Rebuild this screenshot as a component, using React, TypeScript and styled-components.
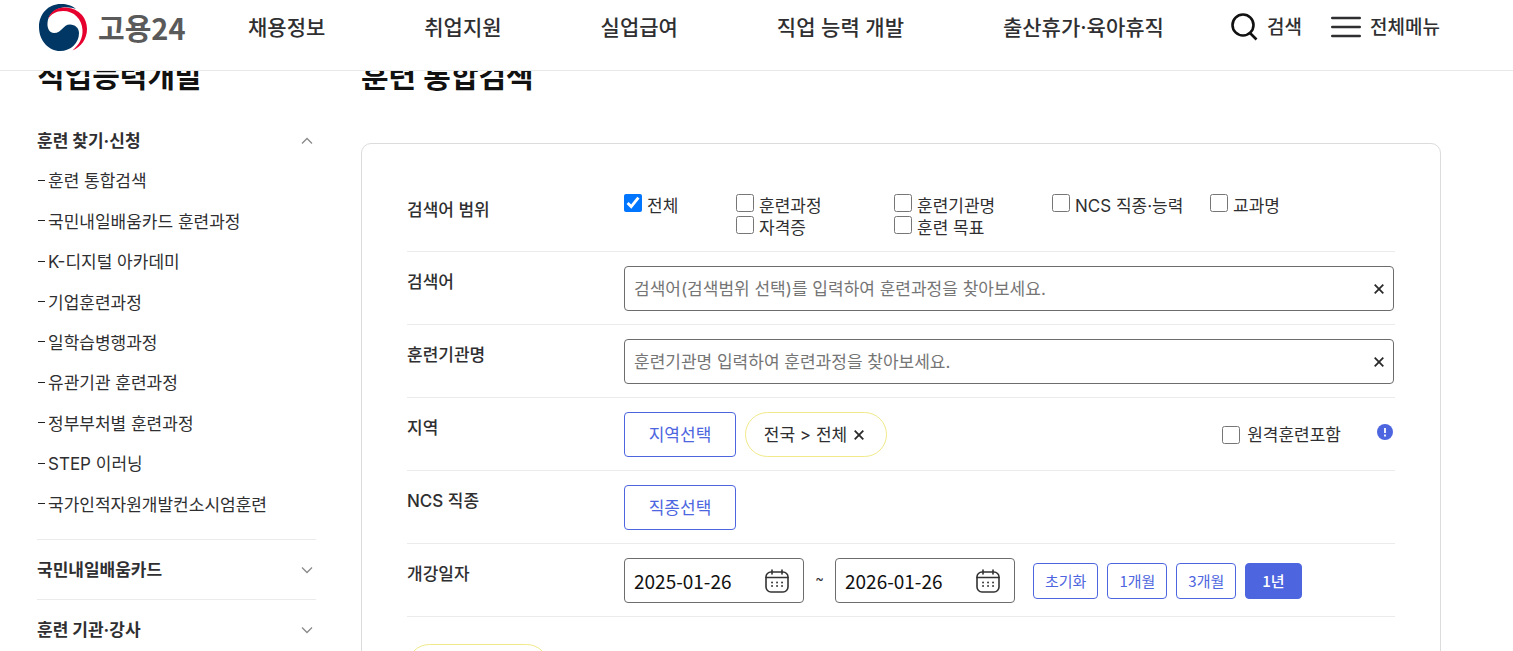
import React, { useState } from "react";
import styled, { createGlobalStyle, css } from "styled-components";

const GlobalStyle = createGlobalStyle`
  *, *::before, *::after { box-sizing: border-box; }
  html { height: 100%; overflow: hidden; }
  body {
    margin: 0;
    height: 100%;
    overflow: hidden;
    background: #fff;
    color: #2f2f31;
    font-family: Inter, "Noto Sans CJK KR", sans-serif;
    font-size: 17px;
    line-height: 24px;
  }
  h1, h2, ul, p, fieldset { margin: 0; padding: 0; border: 0; }
  ul { list-style: none; }
  a { color: inherit; text-decoration: none; }
  button, input { font: inherit; color: inherit; }
  button { padding: 0; border: 0; background: none; cursor: pointer; }
`;

const Header = styled.header`
  position: sticky;
  top: 0;
  z-index: 2;
  display: flex;
  align-items: flex-start;
  height: 71px;
  padding: 3px 73px 0 37px;
  background: #fff;
  border-bottom: 1px solid #e8e8e8;
`;

const Logo = styled.a`
  display: flex;
  align-items: center;
  gap: 10px;
  width: 211px;
  height: 48px;
  color: #5a5a5a;
  font: 700 29px/48px "Noto Sans CJK KR", sans-serif;
  white-space: nowrap;
`;

const Nav = styled.nav`
  display: flex;
  gap: 99px;
  font-size: 21px;
  font-weight: 500;
  line-height: 50px;
  white-space: nowrap;
`;

const Tools = styled.div`
  display: flex;
  gap: 29px;
  margin-left: auto;
`;

const Tool = styled.button`
  display: flex;
  align-items: center;
  gap: 9px;
  height: 48px;
  font-size: 19px;
  font-weight: 500;
  line-height: 28px;
  white-space: nowrap;
  span { padding-top: 2px; }
`;

const Page = styled.div`
  display: grid;
  grid-template-columns: 279px minmax(0, 1fr);
  column-gap: 45px;
  margin-top: -17px;
  padding: 0 72px 0 37px;
`;

const Title = styled.h1`
  color: #111;
  font-size: 30px;
  font-weight: 700;
  line-height: 44px;
  white-space: nowrap;
`;

const Group = styled.section`
  border-top: 1px solid #ebebeb;
  &:first-of-type { margin-top: 13px; border-top: 0; }
`;

const GroupHead = styled.button`
  display: flex;
  align-items: center;
  justify-content: space-between;
  width: 100%;
  height: 59px;
  padding-right: 3px;
  font-weight: 700;
`;

const Links = styled.ul`
  display: grid;
  grid-auto-rows: 1fr;
  height: 378px;
  padding-bottom: 14px;
  margin-top: -9px;
  li { display: flex; align-items: center; gap: 3px; white-space: nowrap; }
  li::before { content: ""; width: 7px; height: 1px; margin: 0 0 2px 1px; background: #222; }
`;

const Panel = styled.form`
  margin-top: 45px;
  padding: 32px 45px 48px;
  border: 1px solid #dcdcdc;
  border-radius: 10px;
`;

const Row = styled.div<{ $tall?: boolean }>`
  display: grid;
  grid-template-columns: 217px minmax(0, 1fr);
  padding: ${(p) => (p.$tall ? "18px 0 11px" : "14px 0 13px")};
  border-bottom: 1px solid #ebebeb;
`;

const RowLabel = styled.span`
  padding-top: 4px;
  font-weight: 500;
`;

const Checks = styled.div`
  display: grid;
  grid-template-columns: 112px repeat(3, 158px) auto;
  grid-auto-rows: 22px;
  padding-bottom: 2px;
`;

const Check = styled.label<{ $second?: boolean; $center?: boolean }>`
  display: flex;
  align-items: ${(p) => (p.$center ? "center" : "flex-start")};
  gap: ${(p) => (p.$center ? 7 : 5)}px;
  white-space: nowrap;
  ${(p) => p.$second && css`grid-column: 2;`}
  input { width: 18px; height: 18px; margin: 0; flex: none; accent-color: #0075ff; }
`;

const Field = styled.div`
  display: flex;
  align-items: center;
  height: 45px;
  margin-right: 1px;
  padding: 0 9px;
  border: 1px solid #6d6d6d;
  border-radius: 4px;
`;

const TextInput = styled.input`
  flex: 1;
  min-width: 0;
  padding: 0;
  border: 0;
  outline: 0;
  background: none;
  &::placeholder { color: #757575; opacity: 1; }
`;

const IconButton = styled.button`
  display: flex;
`;

const Line = styled.div`
  display: flex;
  align-items: center;
  height: 45px;
`;

const Picker = styled.button`
  width: 112px;
  height: 45px;
  border: 1px solid #4d66e0;
  border-radius: 4px;
  color: #4d66e0;
`;

const Tag = styled.button`
  display: flex;
  align-items: center;
  justify-content: center;
  gap: 7px;
  width: 142px;
  height: 45px;
  padding-right: 4px;
  border: 1px solid #f1ea8a;
  border-radius: 23px;
`;

const RegionTag = styled(Tag)`
  margin-left: 9px;
`;

const Remote = styled.div`
  display: flex;
  align-items: center;
  gap: 36px;
  margin-left: auto;
  padding-right: 2px;
`;

const Info = styled(IconButton)`
  height: 22px;
`;

const DateField = styled(Field)`
  width: 180px;
  margin: 0;
  padding-right: 14px;
  color: #111;
  font: 400 19px/24px "Noto Sans CJK KR", sans-serif;
`;

const Tilde = styled.span`
  width: 31px;
  padding-bottom: 6px;
  font-size: 13px;
  text-align: center;
`;

const Periods = styled.div`
  display: flex;
  gap: 9px;
  margin-left: 18px;
`;

const Period = styled.button<{ $active?: boolean }>`
  height: 36px;
  padding: 0 ${(p) => (p.$active ? 16 : 11)}px;
  border: 1px solid #4d66e0;
  border-radius: 4px;
  background: ${(p) => (p.$active ? "#4d66e0" : "#fff")};
  color: ${(p) => (p.$active ? "#fff" : "#4d66e0")};
  font: ${(p) => (p.$active ? 500 : 400)} 15px/22px "Noto Sans CJK KR", sans-serif;
  white-space: nowrap;
`;

const Selected = styled.div`
  padding-top: 27px;
`;

const Emblem = () => (
  <svg width="51" height="49" viewBox="0 0 51 49" aria-hidden="true">
    <path d="M39 6C33 1 27 1 24 1 11 1 2 11 2 24c0 14 10 24 21 24 11 0 19-8 19-18 0-5-4-8.500-9-8.500C26 21.500 25 30 17 30c-4 0-7-4-6.500-10C11 12 17 5.500 26 4.500c5-.500 10 .500 13 1.500Z" fill="#003764" />
    <path d="M11 16C14 8 20 4.500 27 4.500c13 0 23 8.500 23 21.500 0 10-6 18-14.500 21.500C42 42 46 35 45.500 27 45 16 37 8 26 8c-7 0-12 3-15 8Z" fill="#e6002d" />
  </svg>
);

const SearchIcon = () => (
  <svg width="28" height="30" viewBox="0 0 28 30" fill="none" stroke="#111" strokeWidth="2.600" aria-hidden="true">
    <circle cx="13" cy="13" r="10.500" />
    <path d="m19.500 20.500 7 7" />
  </svg>
);

const MenuIcon = () => (
  <svg width="30" height="24" viewBox="0 0 30 24" stroke="#2f2f31" strokeWidth="2.400" strokeLinecap="round" aria-hidden="true">
    <path d="M1.200 3h27.600M1.200 12h27.600M1.200 21h27.600" />
  </svg>
);

const Chevron = ({ up }: { up?: boolean }) => (
  <svg width="12" height="8" viewBox="0 0 12 8" fill="none" stroke="#8a8a8a" strokeWidth="1.300" aria-hidden="true">
    <path d={up ? "M1 6.500 6 1.500l5 5" : "M1 1.500l5 5 5-5"} />
  </svg>
);

const Cross = () => (
  <svg width="10" height="10" viewBox="0 0 10 10" stroke="#2b2b2b" strokeWidth="1.800" aria-hidden="true">
    <path d="M.7.700l8.600 8.600M9.300.700.700 9.300" />
  </svg>
);

const CalendarIcon = () => (
  <svg width="24" height="24" viewBox="0 0 24 24" fill="none" stroke="#333" strokeWidth="1.600" strokeLinecap="round" aria-hidden="true">
    <rect x="1" y="3" width="22" height="20" rx="5" />
    <path d="M1 8.500h22M7 1v4M17 1v4" />
    <path d="M7 13.500h.1M12 13.500h.1M17 13.500h.1M7 17h.1M12 17h.1M17 17h.1" strokeWidth="1.800" />
  </svg>
);

const navItems = ["채용정보", "취업지원", "실업급여", "직업 능력 개발", "출산휴가·육아휴직"];
const courses = [
  "훈련 통합검색",
  "국민내일배움카드 훈련과정",
  "K-디지털 아카데미",
  "기업훈련과정",
  "일학습병행과정",
  "유관기관 훈련과정",
  "정부부처별 훈련과정",
  "STEP 이러닝",
  "국가인적자원개발컨소시엄훈련",
];
const scopes = ["전체", "훈련과정", "훈련기관명", "NCS 직종·능력", "교과명", "자격증", "훈련 목표"];
const periods = ["초기화", "1개월", "3개월", "1년"];

const SearchField = ({ id, label, placeholder }: { id: string; label: string; placeholder: string }) => {
  const [value, setValue] = useState("");
  return (
    <Row>
      <RowLabel as="label" htmlFor={id}>{label}</RowLabel>
      <Field>
        <TextInput id={id} placeholder={placeholder} value={value} onChange={(e) => setValue(e.target.value)} />
        <IconButton type="button" aria-label="지우기" onClick={() => setValue("")}><Cross /></IconButton>
      </Field>
    </Row>
  );
};

const DateBox = ({ label, initial }: { label: string; initial: string }) => (
  <DateField>
    <TextInput aria-label={label} defaultValue={initial} />
    <IconButton type="button" aria-label="달력"><CalendarIcon /></IconButton>
  </DateField>
);

export default function App() {
  const [period, setPeriod] = useState("1년");
  return (
    <>
      <GlobalStyle />
      <Header>
        <Logo href="#"><Emblem />고용24</Logo>
        <Nav>{navItems.map((n) => <a href="#" key={n}>{n}</a>)}</Nav>
        <Tools>
          <Tool><SearchIcon /><span>검색</span></Tool>
          <Tool><MenuIcon /><span>전체메뉴</span></Tool>
        </Tools>
      </Header>
      <Page>
        <aside>
          <Title as="h2">직업능력개발</Title>
          <Group>
            <GroupHead>훈련 찾기·신청<Chevron up /></GroupHead>
            <Links>{courses.map((c) => <li key={c}><a href="#">{c}</a></li>)}</Links>
          </Group>
          <Group><GroupHead>국민내일배움카드<Chevron /></GroupHead></Group>
          <Group><GroupHead>훈련 기관·강사<Chevron /></GroupHead></Group>
        </aside>
        <main>
          <Title>훈련 통합검색</Title>
          <Panel onSubmit={(e) => e.preventDefault()}>
            <Row $tall>
              <RowLabel>검색어 범위</RowLabel>
              <Checks>
                {scopes.map((s, i) => (
                  <Check key={s} $second={i === 5}>
                    <input type="checkbox" defaultChecked={i === 0} />{s}
                  </Check>
                ))}
              </Checks>
            </Row>
            <SearchField id="keyword" label="검색어" placeholder="검색어(검색범위 선택)를 입력하여 훈련과정을 찾아보세요." />
            <SearchField id="institute" label="훈련기관명" placeholder="훈련기관명 입력하여 훈련과정을 찾아보세요." />
            <Row>
              <RowLabel>지역</RowLabel>
              <Line>
                <Picker type="button">지역선택</Picker>
                <RegionTag type="button">전국 &gt; 전체<Cross /></RegionTag>
                <Remote>
                  <Check $center><input type="checkbox" />원격훈련포함</Check>
                  <Info type="button" aria-label="안내">
                    <svg width="16" height="16" viewBox="0 0 16 16" aria-hidden="true">
                      <circle cx="8" cy="8" r="8" fill="#4d66e0" />
                      <path d="M8 4v5M8 10.500v2" stroke="#fff" strokeWidth="1.800" />
                    </svg>
                  </Info>
                </Remote>
              </Line>
            </Row>
            <Row>
              <RowLabel>NCS 직종</RowLabel>
              <Line><Picker type="button">직종선택</Picker></Line>
            </Row>
            <Row>
              <RowLabel>개강일자</RowLabel>
              <Line>
                <DateBox label="개강 시작일" initial="2025-01-26" />
                <Tilde>~</Tilde>
                <DateBox label="개강 종료일" initial="2026-01-26" />
                <Periods>
                  {periods.map((p) => (
                    <Period type="button" key={p} $active={p === period} onClick={() => setPeriod(p)}>{p}</Period>
                  ))}
                </Periods>
              </Line>
            </Row>
            <Selected><Tag type="button">전국 &gt; 전체<Cross /></Tag></Selected>
          </Panel>
        </main>
      </Page>
    </>
  );
}
